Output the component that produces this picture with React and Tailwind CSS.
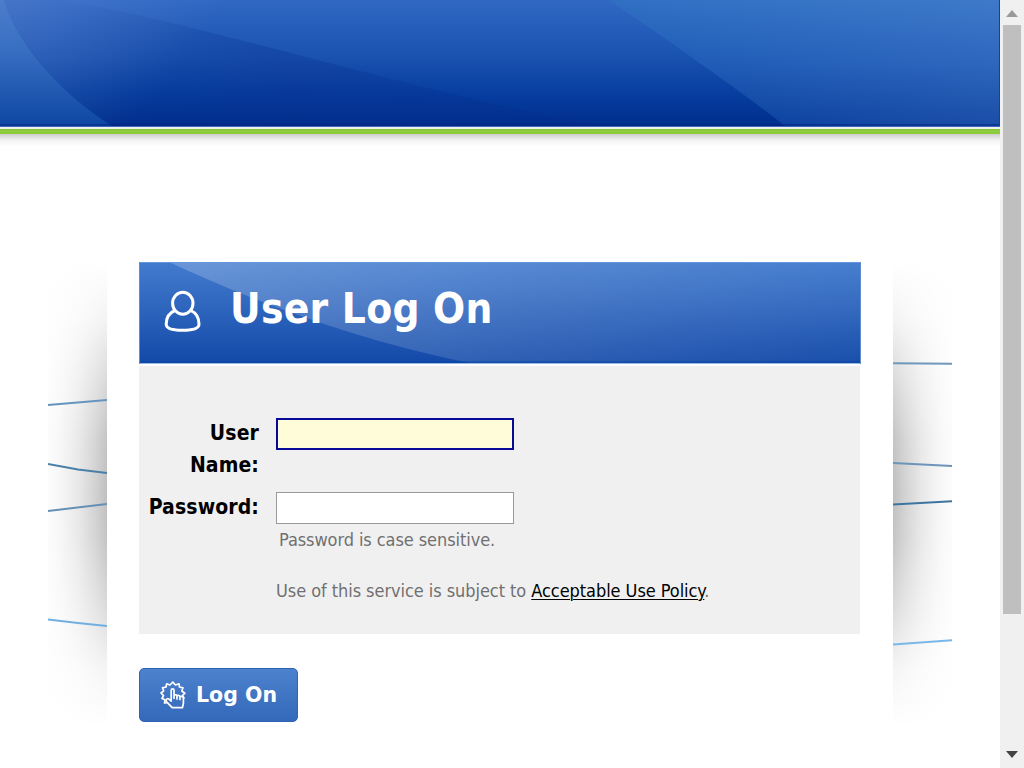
function Banner() {
  return (
    <header className="w-full">
      <svg className="block h-[134px] w-full" viewBox="0 0 1000 134" preserveAspectRatio="none" aria-hidden="true">
        <defs>
          <linearGradient id="banner-base" x1="0" y1="0" x2="0" y2="1">
            <stop offset="0" stopColor="#3068c4" />
            <stop offset="0.45" stopColor="#1a52b0" />
            <stop offset="0.75" stopColor="#063d9e" />
            <stop offset="1" stopColor="#002d8c" />
          </linearGradient>
          <linearGradient id="banner-edge" x1="0" y1="0" x2="0" y2="1">
            <stop offset="0" stopColor="#4c7ccb" />
            <stop offset="0.4" stopColor="#386fc2" />
            <stop offset="1" stopColor="#0e47a3" />
          </linearGradient>
          <linearGradient id="banner-right" x1="0" y1="0" x2="0" y2="1">
            <stop offset="0" stopColor="#3070c3" />
            <stop offset="0.5" stopColor="#1d5ab6" />
            <stop offset="1" stopColor="#063c9b" />
          </linearGradient>
          <linearGradient id="banner-glow" gradientUnits="userSpaceOnUse" x1="650" y1="126" x2="1000" y2="0">
            <stop offset="0" stopColor="#779ee0" stopOpacity="0" />
            <stop offset="1" stopColor="#779ee0" stopOpacity="0.2" />
          </linearGradient>
          <linearGradient id="banner-fade" gradientUnits="userSpaceOnUse" x1="60" y1="0" x2="600" y2="0">
            <stop offset="0" stopColor="#002888" stopOpacity="0.04" />
            <stop offset="0.2" stopColor="#002888" stopOpacity="0.14" />
            <stop offset="0.42" stopColor="#082c8c" stopOpacity="0.3" />
            <stop offset="1" stopColor="#002888" stopOpacity="0.2" />
          </linearGradient>
          <linearGradient id="banner-soft" gradientUnits="userSpaceOnUse" x1="20" y1="0" x2="150" y2="100">
            <stop offset="0" stopColor="#779ad8" stopOpacity="0.28" />
            <stop offset="1" stopColor="#779ad8" stopOpacity="0" />
          </linearGradient>
        </defs>
        <rect width="1000" height="127" fill="url(#banner-base)" />
        <path d="M60 0C210 25 390 86 600 126H112C58 91 18 45 4 0Z" fill="url(#banner-fade)" />
        <path d="M4 0C18 45 58 91 112 126H360V0Z" fill="url(#banner-soft)" />
        <path d="M0 0H4C18 45 58 91 112 126H0Z" fill="url(#banner-edge)" />
        <path d="M609 0C670 42 730 83 785 126H1000V0Z" fill="url(#banner-right)" />
        <path d="M609 0C670 42 730 83 785 126H1000V0Z" fill="url(#banner-glow)" />
        <rect y="124" width="1000" height="2" fill="#00247b" opacity="0.5" />
        <rect x="999" width="1" height="126" fill="#0a45a5" />
        <rect y="126" width="1000" height="1" fill="#4164c9" />
        <rect y="127" width="1000" height="2" fill="#edf3e7" />
        <rect y="129" width="1000" height="5" fill="#8dcc3d" />
        <rect y="129" width="1000" height="1" fill="#86c23c" />
      </svg>
      <div className="h-3 w-full bg-linear-to-b from-[#cdcdcd] via-[#f2f2f2] to-white" />
    </header>
  );
}

function SideShade({ side }) {
  const left = side === "left";
  const lines = left
    ? [
        ["M0 143L59 138", "#6595bf"],
        ["M0 202L30 207.5L59 211", "#4a80a8"],
        ["M0 249L59 242", "#6590b6"],
        ["M0 357.5L30 361L59 364", "#71afe1"],
      ]
    : [
        ["M0 101.3L59 101.8", "#7098bd"],
        ["M0 201L59 204", "#6d94ba"],
        ["M0 242.5L59 239.3", "#3e759f"],
        ["M0 382.5L59 378.3", "#78b8e9"],
      ];
  return (
    <svg className="block h-[464px] w-[59px] shrink-0" viewBox="0 0 59 464" aria-hidden="true">
      <defs>
        <linearGradient id={"shade-across-" + side} x1={left ? "1" : "0"} y1="0" x2={left ? "0" : "1"} y2="0">
          <stop offset="0" stopColor="#bfbfbf" />
          <stop offset="0.2" stopColor="#d2d2d2" />
          <stop offset="0.5" stopColor="#e9e9e9" />
          <stop offset="0.8" stopColor="#f7f7f7" />
          <stop offset="1" stopColor="#fcfcfc" />
        </linearGradient>
        <linearGradient id={"shade-down-" + side} x1="0" y1="0" x2="0" y2="1">
          <stop offset="0" stopColor="#fff" />
          <stop offset="0.12" stopColor="#fff" stopOpacity="0.82" />
          <stop offset="0.26" stopColor="#fff" stopOpacity="0.4" />
          <stop offset="0.38" stopColor="#fff" stopOpacity="0.08" />
          <stop offset="0.5" stopColor="#fff" stopOpacity="0" />
          <stop offset="0.6" stopColor="#fff" stopOpacity="0.08" />
          <stop offset="0.74" stopColor="#fff" stopOpacity="0.42" />
          <stop offset="0.88" stopColor="#fff" stopOpacity="0.84" />
          <stop offset="1" stopColor="#fff" />
        </linearGradient>
      </defs>
      <rect width="59" height="464" fill={"url(#shade-across-" + side + ")"} />
      <rect width="59" height="464" fill={"url(#shade-down-" + side + ")"} />
      {lines.map(([d, color]) => (
        <path key={d} d={d} fill="none" stroke={color} strokeWidth="2" />
      ))}
    </svg>
  );
}

function UserIcon() {
  return (
    <svg className="block h-[44px] w-[38px]" viewBox="0 0 38 44" fill="none" stroke="#fff" strokeWidth="3" aria-hidden="true">
      <ellipse cx="18.8" cy="13.3" rx="10.2" ry="11" />
      <path d="M10.8 20.5C5 23 2.2 28.5 2.2 34.3C2.2 38.5 8 40.3 18.5 40.3S35 38.5 35 34.3C35 28.5 32.5 23 26.8 20.5" />
    </svg>
  );
}

function ClickIcon() {
  return (
    <svg className="block h-[28px] w-[26px] shrink-0" viewBox="0 0 26 28" fill="none" stroke="#fff" strokeWidth="1.7" strokeLinejoin="round" strokeLinecap="round" aria-hidden="true">
      <path d="M6 22L4.5 22L5 18.8L2 17.5L3.5 14.5L1 12L3.7 9.8L2.5 6.8L6 6L6.6 2.8L10 4L12.8 1.2L15.4 4L19 2.8L19.5 6L23 6.8L21.8 10L24.8 12.2L22.5 14.5L24 17" />
      <path d="M11.2 18.5V9.3C11.2 7.4 14 7.4 14 9.3V17.3M14 14.2C15.2 13.2 17 14 17 15.3V18M17 14.7C18.4 13.9 20 14.7 20 16V18.5M20 15.6C21.8 14.8 23.4 15.8 23.4 17.4V22.5L22.4 26.7H12.2L6.4 20.6C5.2 18.3 7.6 17 9 18.2L11.2 20.2" />
    </svg>
  );
}

function LogOnPanel() {
  return (
    <section className="h-[464px] w-[786px] px-8 font-['DejaVu_Sans_Condensed','DejaVu_Sans',sans-serif]">
      <div className="relative h-[102px] w-[722px]">
        <svg className="absolute inset-0 h-[102px] w-[722px]" viewBox="0 0 722 102" aria-hidden="true">
          <defs>
            <linearGradient id="panel-base" x1="0" y1="0" x2="0" y2="1">
              <stop offset="0" stopColor="#427bce" />
              <stop offset="0.45" stopColor="#2e65bd" />
              <stop offset="1" stopColor="#1249a8" />
            </linearGradient>
            <linearGradient id="panel-shine" x1="0" y1="0" x2="1" y2="0">
              <stop offset="0" stopColor="#fff" stopOpacity="0.21" />
              <stop offset="0.5" stopColor="#fff" stopOpacity="0.11" />
              <stop offset="1" stopColor="#fff" stopOpacity="0.03" />
            </linearGradient>
          </defs>
          <rect width="722" height="102" fill="url(#panel-base)" />
          <path d="M30 0C112 38 212 77 330 101H722V0Z" fill="url(#panel-shine)" />
          <path d="M0 .5H722" stroke="#6597dc" />
          <path d="M0 100H722" stroke="#0644a1" strokeWidth="1" />
          <path d="M0 101.5H722" stroke="#9ab8e4" />
          <path d="M721.5 0V102M.5 0V102" stroke="#608cce" />
        </svg>
        <div className="relative flex">
          <div className="ml-[25px] mt-[28px]"><UserIcon /></div>
          <h1 className="ml-[28px] mt-[22px] whitespace-nowrap text-[42px] leading-[50px] font-bold tracking-[0.25px] text-white">User Log On</h1>
        </div>
      </div>
      <form className="mt-[2px] h-[268px] w-[721px] bg-[#f0f0f0] pt-[51px]" onSubmit={(e) => e.preventDefault()}>
        <div className="flex h-[75px]">
          <label htmlFor="user" className="w-[120px] text-right text-[21px] leading-8 font-bold tracking-[0.1px] text-black">User<br />Name:</label>
          <input id="user" className="mt-px ml-[17px] h-8 w-[238px] border-2 border-[#080899] bg-[#fffcd9] outline-none" />
        </div>
        <div className="flex">
          <label htmlFor="password" className="-mt-px w-[120px] text-right text-[21px] leading-8 font-bold tracking-[0.1px] text-black">Password:</label>
          <div className="ml-[17px]">
            <input id="password" type="password" className="block h-8 w-[238px] border border-[#999] bg-white outline-none" />
            <p className="ml-[3px] mt-1 text-[18px] leading-6 tracking-[-0.08px] text-[#707070]">Password is case sensitive.</p>
            <p className="mt-[27px] whitespace-nowrap text-[18px] leading-6 tracking-[-0.06px] text-[#707070]">
              Use of this service is subject to <a href="#policy" className="text-black underline decoration-1 underline-offset-2">Acceptable Use Policy</a>.
            </p>
          </div>
        </div>
      </form>
      <button type="button" className="mt-[34px] flex h-[54px] w-[159px] items-center rounded-[5px] border border-[#2f63b5] bg-linear-to-b from-[#4c82cd] to-[#3469ba] pl-5 text-white">
        <ClickIcon />
        <span className="ml-[10px] whitespace-nowrap font-['DejaVu_Sans',sans-serif] text-[20.5px] leading-7 font-bold">Log On</span>
      </button>
    </section>
  );
}

function Scrollbar() {
  return (
    <aside className="flex h-full w-6 shrink-0 flex-col items-center bg-[#f0f0f0]" aria-hidden="true">
      <svg className="block h-[25px] w-[18px] shrink-0" viewBox="0 0 18 25"><path d="M3 17L9 10L15 17Z" fill="#999" /></svg>
      <div className="h-[589px] w-[18px] bg-[#bfbfbf]" />
      <svg className="mt-auto block h-[25px] w-[18px]" viewBox="0 0 18 25"><path d="M3 8L9 15L15 8Z" fill="#444" /></svg>
    </aside>
  );
}

export default function App() {
  return (
    <div className="flex h-[768px] w-[1024px] overflow-hidden bg-white">
      <div className="w-[1000px]">
        <Banner />
        <main className="mt-[116px] flex justify-center">
          <SideShade side="left" />
          <LogOnPanel />
          <SideShade side="right" />
        </main>
      </div>
      <Scrollbar />
    </div>
  );
}
